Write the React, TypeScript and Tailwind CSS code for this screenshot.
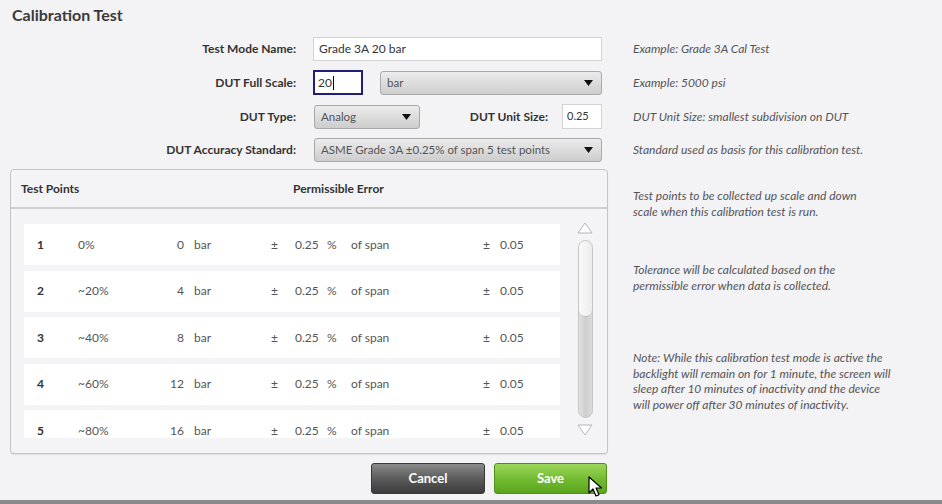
const rows = [
  { n: 1, pct: "0%", val: "0" },
  { n: 2, pct: "~20%", val: "4" },
  { n: 3, pct: "~40%", val: "8" },
  { n: 4, pct: "~60%", val: "12" },
  { n: 5, pct: "~80%", val: "16" },
];

const Select = ({ value, className }: { value: string; className: string }) => (
  <div
    className={`flex h-[24px] items-center justify-between rounded-[3px] border border-[#a9a9a9] bg-gradient-to-b from-[#ececec] to-[#cdcdcd] pl-[6px] pr-[8px] text-[11.5px] text-[#555] ${className}`}
  >
    <span>{value}</span>
    <svg width="9" height="6" viewBox="0 0 9 6">
      <path d="M0 0h9L4.5 6z" fill="#111" />
    </svg>
  </div>
);

const Hint = ({ children }: { children: React.ReactNode }) => (
  <p className="whitespace-nowrap text-[12px] italic leading-[15.5px] text-[#555]">{children}</p>
);

const Cursor = () => (
  <svg className="absolute left-[588px] top-[476px]" width="14" height="22" viewBox="0 0 14 22">
    <path d="M1 1v16l4-4 3 7 3-1.3-3-6.7h5.5z" fill="#fff" stroke="#000" strokeWidth="1.2" strokeLinejoin="round" />
  </svg>
);

export default function App() {
  return (
    <div className="relative h-[504px] w-[942px] overflow-hidden bg-[#f3f2f5] font-['Lato','Open_Sans',sans-serif] text-[#333]">
      <h1 className="pl-[12px] pt-[5px] text-[16px] font-bold leading-[20px] text-[#3a3a3a]">Calibration Test</h1>

      {/* form */}
      <div className="mt-[12px] flex flex-col gap-[9px]">
        <div className="flex items-center">
          <label className="w-[296px] text-right text-[12px] font-bold">Test Mode Name:</label>
          <div className="ml-[17px] flex h-[24px] w-[289px] items-center border border-[#d3d3d3] bg-white px-[5px] text-[12px] text-[#333]">
            Grade 3A 20 bar
          </div>
          <div className="ml-[31px]"><Hint>Example: Grade 3A Cal Test</Hint></div>
        </div>
        <div className="flex items-center">
          <label className="w-[296px] text-right text-[12px] font-bold">DUT Full Scale:</label>
          <div className="ml-[17px] flex h-[25px] w-[50px] items-center border-2 border-[#1f1f7a] bg-white px-[3px] text-[12px] text-[#333]">
            20<span className="ml-px h-[14px] w-px bg-black" />
          </div>
          <Select value="bar" className="ml-[17px] w-[222px]" />
          <div className="ml-[31px]"><Hint>Example: 5000 psi</Hint></div>
        </div>
        <div className="flex items-center">
          <label className="w-[296px] text-right text-[12px] font-bold">DUT Type:</label>
          <Select value="Analog" className="ml-[18px] w-[106px]" />
          <label className="w-[128px] text-right text-[12px] font-bold">DUT Unit Size:</label>
          <div className="ml-[14px] flex h-[25px] w-[40px] items-center border border-[#d3d3d3] bg-white px-[4px] text-[11px] text-[#333]">
            0.25
          </div>
          <div className="ml-[31px]"><Hint>DUT Unit Size: smallest subdivision on DUT</Hint></div>
        </div>
        <div className="flex items-center">
          <label className="w-[296px] text-right text-[12px] font-bold">DUT Accuracy Standard:</label>
          <Select value="ASME Grade 3A ±0.25% of span 5 test points" className="ml-[18px] w-[288px]" />
          <div className="ml-[31px]"><Hint>Standard used as basis for this calibration test.</Hint></div>
        </div>
      </div>

      {/* table + side notes */}
      <div className="mt-[7px] flex">
        <div className="flex w-[608px] flex-col">
          <div className="ml-[10px] h-[285px] overflow-hidden rounded-[4px] border border-[#c4c4c4] bg-[#f4f3f6] shadow-[0_1px_1px_rgba(0,0,0,0.08)]">
            <div className="flex h-[39px] items-center border-b-2 border-[#cfcfcf] text-[12px] font-bold text-[#333]">
              <span className="ml-[10px] w-[272px]">Test Points</span>
              <span>Permissible Error</span>
            </div>
            <div className="flex">
              <div className="ml-[13px] mt-[15px] flex h-[214px] w-[536px] flex-col gap-[5.5px] overflow-hidden">
                {rows.map((r) => (
                  <div key={r.n} className="flex h-[41px] shrink-0 items-center bg-white text-[12px] text-[#555]">
                    <span className="ml-[13px] w-[41px] font-bold text-[#333]">{r.n}</span>
                    <span className="w-[80px]">{r.pct}</span>
                    <span className="w-[26px] text-right">{r.val}</span>
                    <span className="ml-[10px] w-[77px]">bar</span>
                    <span className="w-[24px]">±</span>
                    <span className="w-[32px]">0.25</span>
                    <span className="w-[24px]">%</span>
                    <span className="w-[132px]">of span</span>
                    <span className="w-[17px]">±</span>
                    <span>0.05</span>
                  </div>
                ))}
              </div>
              <div className="ml-[17px] mt-[13px] flex w-[16px] flex-col items-center">
                <svg width="16" height="12" viewBox="0 0 16 12">
                  <path d="M8 1L15 11H1z" fill="#fff" stroke="#b5b5b5" strokeWidth="1" />
                </svg>
                <div className="mt-[6px] h-[178px] w-[15px] rounded-full border border-[#c5c5c5] bg-gradient-to-r from-[#e2e2e2] via-[#cfcfcf] to-[#dadada]">
                  <div className="h-[76px] w-full rounded-full border-b border-[#bdbdbd] bg-gradient-to-r from-[#fafafa] to-[#ececec]" />
                </div>
                <svg className="mt-[6px]" width="16" height="12" viewBox="0 0 16 12">
                  <path d="M8 11L15 1H1z" fill="#fff" stroke="#b5b5b5" strokeWidth="1" />
                </svg>
              </div>
            </div>
          </div>
          <div className="mt-[9px] flex justify-end gap-[9px] pr-px">
            <button className="h-[31px] w-[114px] rounded-[3px] border border-[#3a3a3a] bg-gradient-to-b from-[#8a8a8a] via-[#5c5c5c] to-[#3b3b3b] text-[13px] font-bold text-white">
              Cancel
            </button>
            <button className="h-[31px] w-[113px] rounded-[3px] border border-[#4e8f1c] bg-gradient-to-b from-[#9cd65a] via-[#74bd32] to-[#5aa41d] text-[13px] font-bold text-white">
              Save
            </button>
          </div>
        </div>
        <div className="ml-[25px] flex flex-col">
          <div className="mt-[19px]">
            <Hint>
              Test points to be collected up scale and down
              <br />
              scale when this calibration test is run.
            </Hint>
          </div>
          <div className="mt-[43px]">
            <Hint>
              Tolerance will be calculated based on the
              <br />
              permissible error when data is collected.
            </Hint>
          </div>
          <div className="mt-[57px]">
            <Hint>
              Note: While this calibration test mode is active the
              <br />
              backlight will remain on for 1 minute, the screen will
              <br />
              sleep after 10 minutes of inactivity and the device
              <br />
              will power off after 30 minutes of inactivity.
            </Hint>
          </div>
        </div>
      </div>

      <div className="absolute bottom-0 left-0 h-[4px] w-full bg-[#8a8a8a]" />
      <Cursor />
    </div>
  );
}
